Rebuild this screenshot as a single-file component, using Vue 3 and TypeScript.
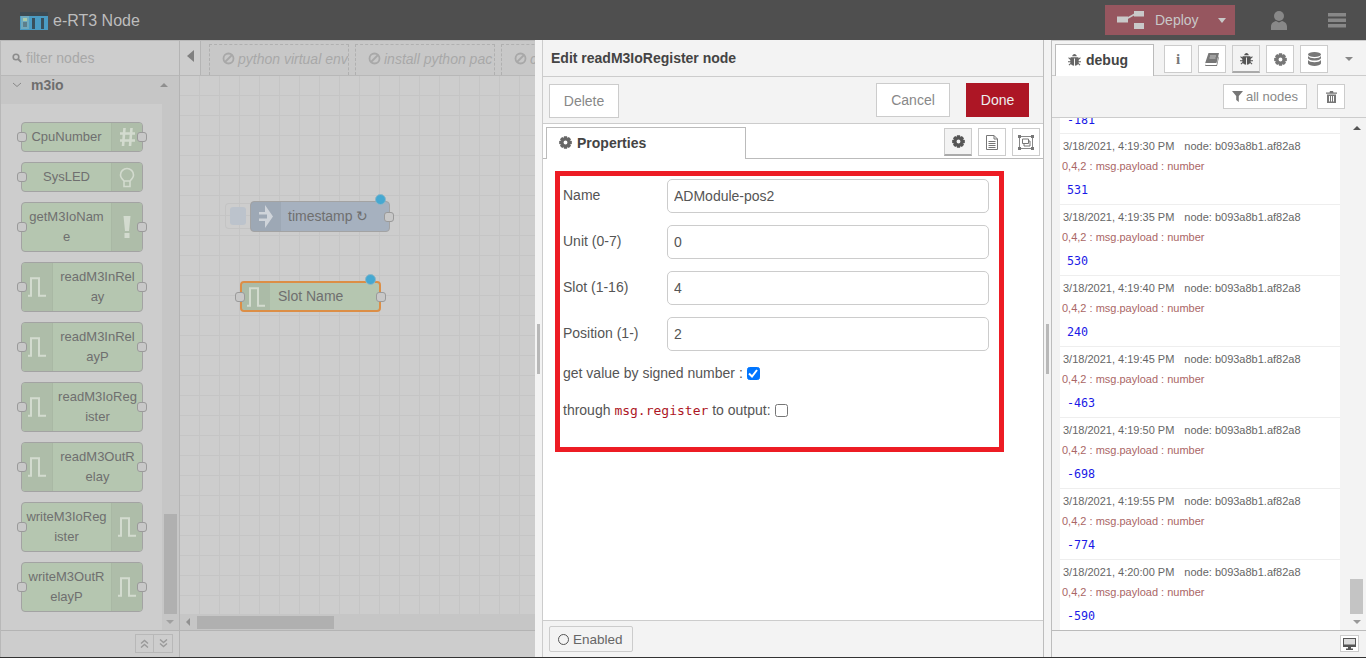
<script setup lang="ts">
interface PaletteNode {
  label: string[]
  icon: 'hash' | 'bulb' | 'bang' | 'pulse'
  side: 'left' | 'right'
  inPort: boolean
  outPort: boolean
}

const paletteNodes: PaletteNode[] = [
  { label: ['CpuNumber'], icon: 'hash', side: 'right', inPort: true, outPort: true },
  { label: ['SysLED'], icon: 'bulb', side: 'right', inPort: true, outPort: false },
  { label: ['getM3IoNam', 'e'], icon: 'bang', side: 'right', inPort: true, outPort: true },
  { label: ['readM3InRel', 'ay'], icon: 'pulse', side: 'left', inPort: true, outPort: true },
  { label: ['readM3InRel', 'ayP'], icon: 'pulse', side: 'left', inPort: true, outPort: true },
  { label: ['readM3IoReg', 'ister'], icon: 'pulse', side: 'left', inPort: true, outPort: true },
  { label: ['readM3OutR', 'elay'], icon: 'pulse', side: 'left', inPort: true, outPort: true },
  { label: ['writeM3IoReg', 'ister'], icon: 'pulse', side: 'right', inPort: true, outPort: true },
  { label: ['writeM3OutR', 'elayP'], icon: 'pulse', side: 'right', inPort: true, outPort: true }
]

const workspaceTabs = ['python virtual env', 'install python pac', 'c']

const fields = [
  { label: 'Name', value: 'ADModule-pos2' },
  { label: 'Unit (0-7)', value: '0' },
  { label: 'Slot (1-16)', value: '4' },
  { label: 'Position (1-)', value: '2' }
]

const debugEntries = [
  { time: '3/18/2021, 4:19:30 PM', value: '531' },
  { time: '3/18/2021, 4:19:35 PM', value: '530' },
  { time: '3/18/2021, 4:19:40 PM', value: '240' },
  { time: '3/18/2021, 4:19:45 PM', value: '-463' },
  { time: '3/18/2021, 4:19:50 PM', value: '-698' },
  { time: '3/18/2021, 4:19:55 PM', value: '-774' },
  { time: '3/18/2021, 4:20:00 PM', value: '-590' }
]

// 8 tooth cog, centre 7,7
const makeGear = () => {
  const pts: string[] = []
  for (let i = 0; i < 8; i++) {
    const a = (i * Math.PI) / 4
    const step = [-0.42, -0.24, 0.24, 0.42]
    const radius = [5.1, 7, 7, 5.1]
    step.forEach((s, j) => {
      const x = 7 + Math.cos(a + s) * radius[j]
      const y = 7 + Math.sin(a + s) * radius[j]
      pts.push(`${x.toFixed(2)} ${y.toFixed(2)}`)
    })
  }
  return `M${pts.join('L')}zM7 4.900a2.100 2.100 0 1 0 0 4.200 2.100 2.100 0 0 0 0-4.200z`
}
const gearPath = makeGear()
const bugPath =
  'M4.500 3.500C4.800 2 5.800 1 7 1s2.200 1 2.500 2.500zM3.500 4.500h7c.5 0 1 .4 1 1V6l1.500-1.300.8.800L11.500 7.500v1.300h2.500v1.100h-2.500l-.2 1 2.100 1.800-.8.800-1.800-1.600C10.100 13 9 13.500 7.500 13.600V6h-1v7.600C5 13.500 3.900 13 3.200 11.900l-1.800 1.600-.8-.8 2.100-1.800-.2-1H0V8.800h2.500V7.500L.2 5.500l.8-.8L2.500 6v-.5c0-.6.500-1 1-1z'
const pulsePath = 'M0 18.800h3V1.200h8v17.600h7'
</script>

<template>
  <div class="app">
    <header class="topbar">
      <div class="brand">
        <svg class="brand-logo" width="28" height="18" viewBox="0 0 28 18">
          <rect width="28" height="18" fill="#4a9cc4" />
          <rect x="0" y="0" width="28" height="4" fill="#3d4a52" />
          <rect x="1" y="4" width="8" height="13" fill="#6fa9bd" />
          <rect x="3" y="6" width="4" height="3" fill="#a9c9a8" />
          <rect x="3" y="10" width="4" height="5" fill="#5d7f8c" />
          <rect x="12" y="6" width="3" height="11" fill="#39505c" />
          <rect x="21" y="6" width="3" height="11" fill="#39505c" />
        </svg>
        <span>e-RT3 Node</span>
      </div>
      <div class="top-actions">
        <div class="deploy">
          <svg width="27" height="18" viewBox="0 0 27 18">
            <path d="M0 5.500h11v6H0zM17 0h10v5.500H17zM17 12h10v6H17z" fill="#c9c9c9" />
            <path d="M10 7.500L18 3" fill="none" stroke="#c9c9c9" stroke-width="1.600" />
          </svg>
          <span class="deploy-text">Deploy</span>
          <span class="deploy-caret"></span>
        </div>
        <svg class="top-icon" width="16" height="19" viewBox="0 0 16 19">
          <ellipse cx="8" cy="5" rx="5" ry="5" fill="#888" />
          <path d="M0 19v-3.500C0 12.500 2.500 10.500 5 10l3 1.500 3-1.500c2.500.5 5 2.500 5 5.500V19z" fill="#888" />
        </svg>
        <svg class="top-icon menu" width="18" height="15" viewBox="0 0 18 15">
          <rect width="18" height="3.500" fill="#888" />
          <rect y="5.500" width="18" height="3.500" fill="#888" />
          <rect y="11" width="18" height="3.500" fill="#888" />
        </svg>
      </div>
    </header>

    <main class="body">
      <aside class="palette">
        <div class="filter">
          <svg width="10" height="10" viewBox="0 0 10 10">
            <circle cx="4" cy="4" r="2.800" fill="none" stroke="#8c8c8c" stroke-width="1.600" />
            <path d="M6 6l3.200 3.200" stroke="#8c8c8c" stroke-width="1.800" />
          </svg>
          <span>filter nodes</span>
        </div>
        <div class="category">
          <svg width="10" height="6" viewBox="0 0 10 6">
            <path d="M1 1l4 3.500L9 1" fill="none" stroke="#888" />
          </svg>
          <span>m3io</span>
          <i class="tri-up"></i>
        </div>
        <div class="palette-scroll">
          <div class="palette-list">
            <div
              v-for="node in paletteNodes"
              :key="node.label.join('')"
              class="pnode"
              :class="node.side === 'left' ? 'icon-left' : 'icon-right'"
            >
              <span v-if="node.inPort" class="port port-in"></span>
              <span v-if="node.outPort" class="port port-out"></span>
              <span class="pnode-label">
                <span v-for="line in node.label" :key="line">{{ line }}</span>
              </span>
              <span class="pnode-icon">
                <svg v-if="node.icon === 'pulse'" width="18" height="20" viewBox="0 0 18 20">
                  <path :d="pulsePath" fill="none" stroke="#d3dbcf" stroke-width="2" />
                </svg>
                <svg v-else-if="node.icon === 'hash'" width="17" height="20" viewBox="0 0 17 20">
                  <path d="M5.500 1L4 19M12.500 1L11 19M1 6.500h15M1 13.500h15" fill="none" stroke="#d3dbcf" stroke-width="2.600" />
                </svg>
                <svg v-else-if="node.icon === 'bulb'" width="16" height="21" viewBox="0 0 16 21">
                  <path d="M5 14C3 12 1.500 10.500 1.500 8a6.500 6.500 0 0 1 13 0c0 2.500-1.500 4-3.500 6zM5 14v5.500h6V14" fill="none" stroke="#d3dbcf" stroke-width="1.600" />
                </svg>
                <svg v-else width="8" height="22" viewBox="0 0 8 22">
                  <path d="M.500 0h7L6 15H2zM1.500 17h5v5h-5z" fill="#d3dbcf" />
                </svg>
              </span>
            </div>
          </div>
          <div class="vscroll">
            <i class="tri-down"></i>
            <div class="vthumb"></div>
          </div>
        </div>
        <div class="palette-footer">
          <div class="pager">
            <span>
              <svg width="9" height="9" viewBox="0 0 9 9"><path d="M1 4.500l3.500-3 3.500 3M1 8.500l3.500-3 3.500 3" fill="none" stroke="#9a9a9a" stroke-width="1.400" /></svg>
            </span>
            <span>
              <svg width="9" height="9" viewBox="0 0 9 9"><path d="M1 .5l3.500 3 3.500-3M1 4.500l3.500 3 3.500-3" fill="none" stroke="#9a9a9a" stroke-width="1.400" /></svg>
            </span>
          </div>
        </div>
      </aside>

      <section class="workspace">
        <div class="ws-tabs">
          <div class="ws-arrow"><i></i></div>
          <div class="ws-divider"></div>
          <div v-for="tab in workspaceTabs" :key="tab" class="ws-tab">
            <svg width="13" height="13" viewBox="0 0 13 13">
              <circle cx="6.500" cy="6.500" r="5" fill="none" stroke="#a8a8a8" stroke-width="1.800" />
              <path d="M3 10L10 3" stroke="#a8a8a8" stroke-width="1.800" />
            </svg>
            <em>{{ tab }}</em>
          </div>
        </div>
        <div class="canvas">
          <div class="flow-node timestamp">
            <span class="inject-btn"><i></i></span>
            <span class="flow-icon">
              <svg width="14" height="23" viewBox="0 0 14 23">
                <path d="M0 7h6V0l8 11.500L6 23v-7H0v-2.500h8v-4H0z" fill="#cfd4da" />
              </svg>
            </span>
            <span class="flow-label">timestamp ↻</span>
            <span class="port port-out"></span>
            <span class="dot"></span>
          </div>
          <div class="flow-node slot">
            <span class="port port-in"></span>
            <span class="flow-icon">
              <svg width="18" height="20" viewBox="0 0 18 20">
                <path :d="pulsePath" fill="none" stroke="#d3dbcf" stroke-width="2" />
              </svg>
            </span>
            <span class="flow-label">Slot Name</span>
            <span class="port port-out"></span>
            <span class="dot"></span>
          </div>
          <div class="hscroll"><i class="tri-left"></i><div class="hthumb"></div></div>
        </div>
        <div class="ws-footer"></div>
      </section>

      <div class="splitter left-split"><i></i></div>

      <section class="tray">
        <div class="tray-title">Edit readM3IoRegister node</div>
        <div class="tray-toolbar">
          <button class="btn delete">Delete</button>
          <div class="tray-actions">
            <button class="btn cancel">Cancel</button>
            <button class="btn done">Done</button>
          </div>
        </div>
        <div class="tray-tabs">
          <div class="prop-tab">
            <svg width="13" height="13" viewBox="0 0 14 14"><path :d="gearPath" fill="#666" fill-rule="evenodd" /></svg>
            Properties
          </div>
          <div class="tray-icons">
            <span class="icon-btn selected">
              <svg width="13" height="13" viewBox="0 0 14 14"><path :d="gearPath" fill="#555" fill-rule="evenodd" /></svg>
            </span>
            <span class="icon-btn">
              <svg width="12" height="15" viewBox="0 0 12 15">
                <path d="M.5.5h7.500l3.500 3.500v10.500H.5zM8 .5V4h3.500M2.500 6.500h7M2.500 8.500h7M2.500 10.500h7M2.500 12.500h7" fill="none" stroke="#777" />
              </svg>
            </span>
            <span class="icon-btn">
              <svg width="16" height="15" viewBox="0 0 16 15">
                <path d="M1.500 1.500h13v12h-13z" fill="none" stroke="#888" />
                <path d="M4.500 4h6v4.500h-6zM6 8.500v2.500h6V6h-1.500" fill="none" stroke="#777" />
                <path d="M0 0h3v3H0zM13 0h3v3h-3zM0 12h3v3H0zM13 12h3v3h-3z" fill="#777" />
              </svg>
            </span>
          </div>
        </div>
        <div class="tray-content">
          <div class="red-box">
            <div v-for="field in fields" :key="field.label" class="form-row">
              <label>{{ field.label }}</label>
              <input type="text" :value="field.value" readonly />
            </div>
            <div class="check-row first">
              <span>get value by signed number :</span>
              <span class="check on">
                <svg width="10" height="9" viewBox="0 0 10 9"><path d="M1 4.500l3 3L9 1" fill="none" stroke="#fff" stroke-width="2" /></svg>
              </span>
            </div>
            <div class="check-row">
              <span>through <code>msg.register</code> to output:</span>
              <span class="check"></span>
            </div>
          </div>
        </div>
        <div class="tray-footer">
          <button class="enabled"><i></i>Enabled</button>
        </div>
      </section>

      <div class="splitter right-split"><i></i></div>

      <aside class="sidebar">
        <div class="side-tabs">
          <div class="debug-tab">
            <svg width="13" height="13" viewBox="0 0 14 14"><path :d="bugPath" fill="#666" /></svg>
            debug
          </div>
          <span class="side-btn info"><b>i</b></span>
          <span class="side-btn">
            <svg width="14" height="13" viewBox="0 0 14 13">
              <path d="M3.500 0H14l-2.500 10H1C.2 10 0 10.500 0 11s.5 1 1 1h10.500l2-8.500.5.500L12 13H1C0 13-.5 12 .2 10z" fill="#777" />
              <path d="M5 3h6M4.500 5h6" stroke="#ddd" stroke-width=".8" />
            </svg>
          </span>
          <span class="side-btn selected">
            <svg width="13" height="13" viewBox="0 0 14 14"><path :d="bugPath" fill="#555" /></svg>
          </span>
          <span class="side-btn">
            <svg width="13" height="13" viewBox="0 0 14 14"><path :d="gearPath" fill="#777" fill-rule="evenodd" /></svg>
          </span>
          <span class="side-btn">
            <svg width="13" height="14" viewBox="0 0 13 14">
              <ellipse cx="6.500" cy="2.500" rx="6.500" ry="2.500" fill="#777" />
              <path d="M0 4c1 1.500 3.500 2.200 6.500 2.200S12 5.500 13 4v2.200C12.500 7.600 9.500 8.500 6.500 8.500S.5 7.600 0 6.200zM0 8c1 1.500 3.500 2.200 6.500 2.200S12 9.500 13 8v3.500C12.500 13 9.500 14 6.500 14S.5 13 0 11.500z" fill="#777" />
            </svg>
          </span>
          <i class="tab-caret"></i>
        </div>
        <div class="side-toolbar">
          <button class="tool-btn">
            <svg width="11" height="11" viewBox="0 0 11 11"><path d="M0 0h11L6.800 5v6L4.200 9V5z" fill="#777" /></svg>
            all nodes
          </button>
          <button class="tool-btn trash">
            <svg width="11" height="12" viewBox="0 0 11 12">
              <path d="M4 0h3l.5 1.500H11v1.200H0V1.500h3.500zM1 3.500h9V12H1zM3 5v5.500h1V5zM5 5v5.500h1V5zM7 5v5.500h1V5z" fill="#777" fill-rule="evenodd" />
            </svg>
          </button>
        </div>
        <div class="debug-panel">
          <div class="debug-list">
            <div class="debug-cut"><span>-181</span></div>
            <div v-for="entry in debugEntries" :key="entry.time" class="debug-entry">
              <div class="debug-meta"><span>{{ entry.time }}</span><span>node: b093a8b1.af82a8</span></div>
              <div class="debug-topic">0,4,2 : msg.payload : number</div>
              <div class="debug-value">{{ entry.value }}</div>
            </div>
          </div>
          <div class="debug-scroll">
            <i class="tri-up dark"></i>
            <div class="debug-thumb"></div>
            <i class="tri-down dark"></i>
          </div>
        </div>
        <div class="side-footer">
          <span class="monitor">
            <svg width="13" height="12" viewBox="0 0 13 12">
              <path d="M0 0h13v9H8v1.500h2V12H3v-1.500h2V9H0z" fill="#555" />
              <path d="M1 1h11v5.500H1z" fill="#ddd" />
            </svg>
          </span>
        </div>
      </aside>
    </main>
  </div>
</template>

<style scoped>
.app {
  width: 1366px;
  height: 658px;
  overflow: hidden;
  display: flex;
  flex-direction: column;
  font-family: "Liberation Sans", Arial, sans-serif;
  font-size: 14px;
  color: #555;
  background: #333;
}

/* header */
.topbar {
  height: 40px;
  flex: none;
  background: #4f4f4f;
  display: flex;
  align-items: center;
  justify-content: space-between;
}
.brand {
  display: flex;
  align-items: center;
  gap: 5px;
  padding: 2px 0 0 20px;
  font-size: 16px;
  color: #bdbdbd;
}
.brand-logo {
  display: block;
}
.top-actions {
  display: flex;
  align-items: center;
}
.deploy {
  width: 130px;
  height: 30px;
  box-sizing: border-box;
  background: #96565f;
  margin-right: 36px;
  padding-left: 12px;
  display: flex;
  align-items: center;
  color: #c8c8c8;
}
.deploy-text {
  margin-left: 11px;
}
.deploy-caret {
  margin-left: 19px;
  border-left: 4.5px solid transparent;
  border-right: 4.5px solid transparent;
  border-top: 5px solid #c8c8c8;
}
.top-icon {
  display: block;
  margin-right: 41px;
}
.top-icon.menu {
  margin-right: 20px;
}

.body {
  height: 617px;
  flex: none;
  display: flex;
}

/* palette */
.palette {
  width: 180px;
  flex: none;
  box-sizing: border-box;
  background: #cdcdcd;
  border-left: 1px solid #b8b8b8;
  border-right: 1px solid #b4b4b4;
  border-top: 1px solid #b8b8b8;
  display: flex;
  flex-direction: column;
}
.filter {
  height: 35px;
  flex: none;
  box-sizing: border-box;
  border-bottom: 1px solid #b8b8b8;
  padding-left: 11px;
  display: flex;
  align-items: center;
  gap: 4px;
  color: #a8a8a8;
}
.category {
  height: 28px;
  flex: none;
  box-sizing: border-box;
  background: #c6c6c6;
  padding: 0 11px 10px 11px;
  display: flex;
  align-items: center;
  font-weight: 700;
  color: #6e6e6e;
}
.category span {
  margin-left: 9px;
  flex: 1;
}
.tri-up,
.tri-down,
.tri-left {
  display: block;
  width: 0;
  height: 0;
}
.tri-up {
  border-left: 4px solid transparent;
  border-right: 4px solid transparent;
  border-bottom: 4px solid #8f8f8f;
}
.tri-down {
  border-left: 4px solid transparent;
  border-right: 4px solid transparent;
  border-top: 4px solid #a0a0a0;
}
.tri-left {
  border-top: 4px solid transparent;
  border-bottom: 4px solid transparent;
  border-right: 4px solid #909090;
}
.palette-scroll {
  flex: 1;
  min-height: 0;
  display: flex;
}
.palette-list {
  width: 161px;
  flex: none;
  box-sizing: border-box;
  padding: 18px 0 0 20px;
  background: #cdcdcd;
  display: flex;
  flex-direction: column;
  gap: 10px;
}
.vscroll {
  flex: 1;
  background: #c6c6c6;
  position: relative;
}
.vscroll .tri-down {
  position: absolute;
  left: 4px;
  bottom: 6px;
}
.vthumb {
  position: absolute;
  left: 2px;
  right: 2px;
  top: 410px;
  height: 100px;
  background: #b0b0b0;
}
.pnode {
  position: relative;
  width: 122px;
  min-height: 30px;
  box-sizing: border-box;
  background: #b5c6b0;
  border: 1px solid #a3a3a3;
  border-radius: 4px;
  display: flex;
  flex: none;
  font-size: 13px;
  color: #6f6f6f;
}
.pnode.icon-left {
  flex-direction: row-reverse;
}
.pnode-label {
  flex: 1;
  min-width: 0;
  display: flex;
  flex-direction: column;
  align-items: center;
  justify-content: center;
  line-height: 20px;
  padding: 4px 0;
  white-space: nowrap;
}
.pnode-icon {
  width: 31px;
  flex: none;
  box-sizing: border-box;
  background: #aebda9;
  display: flex;
  align-items: center;
  justify-content: center;
}
.icon-left .pnode-icon {
  border-radius: 3px 0 0 3px;
  border-right: 1px solid #a9b8a4;
}
.icon-right .pnode-icon {
  border-radius: 0 3px 3px 0;
  border-left: 1px solid #a9b8a4;
}
.port {
  position: absolute;
  top: 50%;
  width: 10px;
  height: 10px;
  margin-top: -5px;
  box-sizing: border-box;
  background: #c8c8c8;
  border: 1px solid #9a9a9a;
  border-radius: 3px;
  z-index: 1;
}
.port-in {
  left: -5px;
}
.port-out {
  right: -5px;
}
.palette-footer {
  height: 27px;
  flex: none;
  box-sizing: border-box;
  border-top: 1px solid #b4b4b4;
  display: flex;
  justify-content: flex-end;
  padding: 3px 6px 0 0;
}
.pager {
  display: flex;
  height: 19px;
}
.pager span {
  width: 19px;
  box-sizing: border-box;
  border: 1px solid #b8b8b8;
  display: flex;
  align-items: center;
  justify-content: center;
}
.pager span + span {
  border-left: 0;
}

/* workspace */
.workspace {
  width: 355px;
  flex: none;
  display: flex;
  flex-direction: column;
  background: #cdcdcd;
  border-top: 1px solid #b8b8b8;
  box-sizing: border-box;
}
.ws-tabs {
  height: 35px;
  flex: none;
  box-sizing: border-box;
  background: #c8c8c8;
  border-bottom: 1px solid #b8b8b8;
  display: flex;
  overflow: hidden;
}
.ws-arrow {
  width: 20px;
  flex: none;
  background: #cdcdcd;
  display: flex;
  align-items: center;
  justify-content: center;
  padding-bottom: 5px;
  box-sizing: border-box;
}
.ws-arrow i {
  border-top: 6px solid transparent;
  border-bottom: 6px solid transparent;
  border-right: 7px solid #808080;
}
.ws-divider {
  width: 9px;
  flex: none;
  box-sizing: border-box;
  border-left: 1px solid #b4b4b4;
}
.ws-tab {
  width: 140px;
  flex: none;
  box-sizing: border-box;
  height: 31px;
  margin: 3px 6px 0 0;
  padding: 0 0 3px 12px;
  border: 1px dashed #b0b0b0;
  border-bottom: 0;
  background: #c8c8c8;
  display: flex;
  align-items: center;
  gap: 3px;
  overflow: hidden;
  white-space: nowrap;
  color: #a8a8a8;
}
.ws-tab svg {
  flex: none;
}
.canvas {
  flex: 1;
  min-height: 0;
  position: relative;
  overflow: hidden;
  background-color: #cdcdcd;
  background-image:
    linear-gradient(to right, #c5c5c5 1px, transparent 1px),
    linear-gradient(to bottom, #c5c5c5 1px, transparent 1px);
  background-size: 20px 20px;
  background-position: 19px 19px;
}
.hscroll {
  position: absolute;
  left: 0;
  right: 0;
  bottom: 0;
  height: 16px;
  background: #c6c6c6;
}
.hscroll .tri-left {
  position: absolute;
  left: 6px;
  top: 4px;
}
.hthumb {
  position: absolute;
  left: 17px;
  top: 2px;
  width: 137px;
  height: 13px;
  background: #b0b0b0;
}
.ws-footer {
  height: 27px;
  flex: none;
  box-sizing: border-box;
  border-top: 1px solid #b4b4b4;
}
.flow-node {
  position: absolute;
  height: 31px;
  box-sizing: border-box;
  border-radius: 4px;
  display: flex;
  align-items: stretch;
  color: #6f6f6f;
}
.flow-node.timestamp {
  left: 70px;
  top: 125px;
  width: 140px;
  background: #a6b1bf;
  border: 1px solid #a3a3a3;
}
.flow-node.slot {
  left: 60px;
  top: 205px;
  width: 141px;
  background: #b5c6b0;
  border: 2px solid #dc8e46;
}
.flow-icon {
  width: 30px;
  flex: none;
  display: flex;
  align-items: center;
  justify-content: center;
  background: rgba(0, 0, 0, 0.05);
  border-radius: 3px 0 0 3px;
}
.flow-label {
  flex: 1;
  display: flex;
  align-items: center;
  white-space: nowrap;
  padding: 0 0 2px 7px;
}
.slot .flow-icon {
  width: 28px;
}
.slot .flow-label {
  padding-left: 8px;
}
.slot .port-in {
  left: -7px;
}
.slot .port-out {
  right: -7px;
}
.slot .dot {
  right: 3px;
  top: -9px;
}
.dot {
  position: absolute;
  right: 3px;
  top: -8px;
  width: 11px;
  height: 11px;
  box-sizing: border-box;
  border-radius: 50%;
  background: #45a8d1;
  border: 1px solid #8cb7c8;
}
.inject-btn {
  position: absolute;
  left: -26px;
  top: 1px;
  width: 25px;
  height: 26px;
  box-sizing: border-box;
  border: 1px solid #c4c4c4;
  border-right: 0;
  border-radius: 4px 0 0 4px;
  display: flex;
  align-items: center;
  padding-left: 4px;
}
.inject-btn i {
  display: block;
  width: 16px;
  height: 18px;
  background: #bcc3cc;
  border-radius: 3px;
}

/* splitters */
.splitter {
  width: 8px;
  flex: none;
  display: flex;
  align-items: center;
  justify-content: center;
}
.left-split {
  background: #f3f3f3;
  border-right: 1px solid #ccc;
  box-sizing: border-box;
}
.right-split {
  width: 9px;
  background: #f3f3f3;
  border-left: 1px solid #bdbdbd;
  border-right: 1px solid #bdbdbd;
  box-sizing: border-box;
}
.splitter i {
  display: block;
  width: 3px;
  height: 50px;
  background: #b8b8b8;
}

/* tray */
.tray {
  width: 500px;
  flex: none;
  display: flex;
  flex-direction: column;
  background: #fff;
}
.tray-title {
  height: 37px;
  flex: none;
  box-sizing: border-box;
  background: #f3f3f3;
  border-bottom: 1px solid #ccc;
  padding: 0 0 0 8px;
  display: flex;
  align-items: center;
  font-weight: 700;
  color: #444;
}
.tray-toolbar {
  height: 47px;
  flex: none;
  box-sizing: border-box;
  background: #f3f3f3;
  border-bottom: 1px solid #ccc;
  padding: 6px 14px 0 6px;
  display: flex;
  justify-content: space-between;
  align-items: flex-start;
}
.tray-actions {
  display: flex;
  gap: 16px;
}
.btn {
  height: 34px;
  padding: 0;
  box-sizing: border-box;
  background: #fff;
  border: 1px solid #ccc;
  font: inherit;
  color: #888;
}
.btn.delete {
  width: 70px;
  margin-top: 1px;
}
.btn.cancel {
  width: 74px;
}
.btn.done {
  width: 63px;
  background: #ad1625;
  border-color: #ad1625;
  color: #eee;
}
.tray-tabs {
  height: 35px;
  flex: none;
  box-sizing: border-box;
  background: #fff;
  border-bottom: 1px solid #bbb;
  padding: 3px 3px 0 3px;
  display: flex;
  justify-content: space-between;
}
.prop-tab {
  width: 200px;
  height: 32px;
  box-sizing: border-box;
  border: 1px solid #bbb;
  border-bottom: 0;
  background: #fff;
  padding: 0 0 2px 12px;
  display: flex;
  align-items: center;
  gap: 5px;
  font-weight: 700;
  color: #444;
}
.tray-icons {
  display: flex;
  gap: 6px;
}
.icon-btn {
  width: 28px;
  height: 28px;
  box-sizing: border-box;
  border: 1px solid #ccc;
  background: #fff;
  display: flex;
  align-items: center;
  justify-content: center;
  margin-top: 1px;
}
.icon-btn.selected {
  background: #f3f3f3;
  border-bottom: 2px solid #aaa;
}
.tray-content {
  flex: 1;
  min-height: 0;
  padding: 12px 0 0 12px;
}
.red-box {
  width: 449px;
  height: 281px;
  box-sizing: border-box;
  border: 5px solid #ed1c24;
  padding: 3px 10px 0 3px;
}
.form-row {
  height: 34px;
  margin-bottom: 12px;
  display: flex;
  align-items: flex-start;
}
.form-row label {
  width: 104px;
  flex: none;
  line-height: 32px;
  color: #555;
}
.form-row input {
  width: 322px;
  height: 34px;
  box-sizing: border-box;
  border: 1px solid #ccc;
  border-radius: 5px;
  padding: 0 6px;
  font: inherit;
  color: #555;
  outline: 0;
}
.check-row {
  display: flex;
  align-items: center;
  height: 20px;
  white-space: nowrap;
  margin-top: 17px;
}
.check-row.first {
  margin-top: -1px;
  padding-top: 1px;
}
.check-row code {
  font-family: "DejaVu Sans Mono", monospace;
  font-size: 13px;
  color: #ad1625;
}
.check {
  width: 13px;
  height: 13px;
  box-sizing: border-box;
  margin-left: 4px;
  border: 1px solid #767676;
  border-radius: 2.500px;
  background: #fff;
  display: flex;
  align-items: center;
  justify-content: center;
}
.check.on {
  background: #0075ff;
  border-color: #0075ff;
}
.tray-footer {
  height: 37px;
  flex: none;
  box-sizing: border-box;
  background: #f3f3f3;
  border-top: 1px solid #ccc;
  padding: 5px 6px;
}
.enabled {
  width: 84px;
  height: 26px;
  box-sizing: border-box;
  border: 1px solid #ccc;
  border-radius: 2px;
  background: #f3f3f3;
  font: inherit;
  font-size: 13.500px;
  color: #666;
  display: flex;
  align-items: center;
  padding: 0 0 0 8px;
  gap: 4px;
}
.enabled i {
  display: block;
  width: 11px;
  height: 11px;
  box-sizing: border-box;
  border: 1px solid #555;
  border-radius: 50%;
}

/* sidebar */
.sidebar {
  flex: 1;
  min-width: 0;
  display: flex;
  flex-direction: column;
  background: #fff;
}
.side-tabs {
  height: 36px;
  flex: none;
  box-sizing: border-box;
  background: #f3f3f3;
  border-bottom: 1px solid #ccc;
  border-top: 1px solid #ccc;
  padding: 3px 0 0 3px;
  display: flex;
  align-items: flex-start;
}
.debug-tab {
  width: 99px;
  height: 32px;
  box-sizing: border-box;
  border: 1px solid #bbb;
  border-bottom: 0;
  background: #fff;
  padding: 0 0 2px 12px;
  display: flex;
  align-items: center;
  gap: 5px;
  font-weight: 700;
  color: #444;
}
.side-btn {
  width: 28px;
  height: 28px;
  box-sizing: border-box;
  margin: 1px 0 0 6px;
  border: 1px solid #ccc;
  background: #fff;
  display: flex;
  align-items: center;
  justify-content: center;
}
.debug-tab + .side-btn {
  margin-left: 10px;
}
.side-btn.info b {
  font-family: "Liberation Serif", serif;
  font-size: 15px;
  color: #777;
}
.side-btn.selected {
  background: #f3f3f3;
  border-bottom: 2px solid #aaa;
}
.tab-caret {
  margin: 13px 0 0 17px;
  border-left: 4px solid transparent;
  border-right: 4px solid transparent;
  border-top: 4px solid #888;
}
.side-toolbar {
  height: 42px;
  flex: none;
  box-sizing: border-box;
  background: #f3f3f3;
  border-bottom: 1px solid #ccc;
  padding: 8px 21px 0 0;
  display: flex;
  justify-content: flex-end;
  gap: 10px;
}
.tool-btn {
  width: 84px;
  height: 25px;
  box-sizing: border-box;
  border: 1px solid #ccc;
  background: #fff;
  font: 13px "Liberation Sans", Arial, sans-serif;
  color: #888;
  padding: 0 0 0 8px;
  display: flex;
  align-items: center;
  gap: 3px;
}
.tool-btn.trash {
  width: 28px;
  justify-content: center;
  padding: 0;
}
.debug-panel {
  flex: 1;
  min-height: 0;
  display: flex;
  background: #f3f3f3;
  border-bottom: 1px solid #bbb;
}
.debug-list {
  width: 280px;
  margin-left: 8px;
  flex: none;
  overflow: hidden;
  background: #fff;
}
.debug-cut {
  height: 16px;
  box-sizing: border-box;
  border-bottom: 1px solid #eee;
  position: relative;
  overflow: hidden;
}
.debug-cut span,
.debug-value {
  font-family: "DejaVu Sans Mono", monospace;
  font-size: 11.700px;
  color: #1a1ae6;
}
.debug-cut span {
  position: absolute;
  left: 7px;
  bottom: 7px;
  line-height: 11px;
}
.debug-entry {
  height: 71px;
  box-sizing: border-box;
  border-bottom: 1px solid #eee;
  padding: 2px 0 0 3px;
  font-size: 11px;
}
.debug-meta {
  display: flex;
  gap: 10px;
  height: 20px;
  line-height: 20px;
  color: #666;
}
.debug-topic {
  height: 20px;
  line-height: 20px;
  color: #a66;
  margin-left: -1px;
}
.debug-value {
  margin: 6px 0 0 4px;
  line-height: 17px;
}
.debug-scroll {
  flex: 1;
  position: relative;
}
.debug-scroll .tri-up {
  position: absolute;
  left: 13px;
  top: 8px;
}
.debug-scroll .tri-down {
  position: absolute;
  left: 13px;
  bottom: 6px;
}
.tri-up.dark {
  border-bottom-color: #555;
}
.tri-down.dark {
  border-top-color: #999;
}
.debug-thumb {
  position: absolute;
  left: 10px;
  right: 3px;
  bottom: 16px;
  height: 35px;
  background: #c4c4c4;
}
.side-footer {
  height: 26px;
  flex: none;
  box-sizing: border-box;
  background: #f3f3f3;
  padding: 4px 7px 0 0;
  display: flex;
  justify-content: flex-end;
}
.monitor {
  width: 19px;
  height: 17px;
  box-sizing: border-box;
  border: 1px solid #ccc;
  background: #fff;
  display: flex;
  align-items: center;
  justify-content: center;
}
</style>

<style>
html,
body {
  margin: 0;
  overflow: hidden;
}
</style>
